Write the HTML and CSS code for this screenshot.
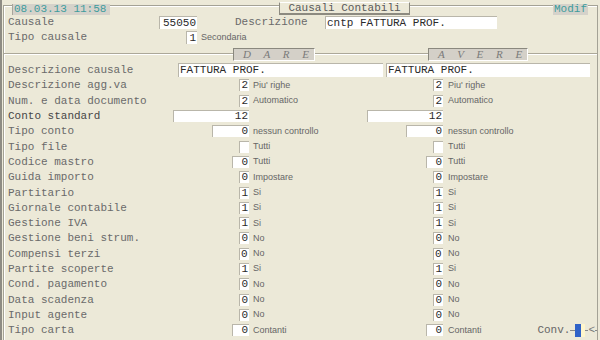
FILE: index.html
```html
<!DOCTYPE html>
<html lang="it">
<head>
  <meta charset="UTF-8" />
  <title>Causali Contabili</title>
  <link rel="stylesheet" href="styles.css">
</head>
<body>
  <div class="screen">
    <div class="frame">
      <!-- barra in alto: data, titolo, modalita -->
      <div class="top">
        <div class="clock">08.03.13 11:58</div>
        <div class="title">Causali Contabili</div>
        <div class="modif">Modif</div>
      </div>

      <!-- testata causale -->
      <div class="head-row">
        <span class="lbl-causale">Causale</span>
        <span class="box w38">55050</span>
        <span class="lbl-descr">Descrizione</span>
        <span class="box w172 left">cntp FATTURA PROF.</span>
      </div>
      <div class="head-row">
        <span class="lbl-tipo">Tipo causale</span>
        <span class="box w11">1</span>
        <span class="n">Secondaria</span>
      </div>

      <!-- separatore dare / avere -->
      <div class="sep">
        <div class="tab dare">D A R E</div>
        <div class="tab avere">A V E R E</div>
      </div>

      <div class="row">
        <span>Descrizione causale</span>
        <div class="wide">
          <span class="box left d1">FATTURA PROF.</span>
          <span class="box left d2">FATTURA PROF.</span>
        </div>
      </div>
      <div class="row">
        <span>Descrizione agg.va</span>
        <div class="f"><span class="box w10">2</span></div><span class="n">Piu' righe</span>
        <div class="f"><span class="box w10">2</span></div><span class="n a">Piu' righe</span>
      </div>
      <div class="row">
        <span>Num. e data documento</span>
        <div class="f"><span class="box w10">2</span></div><span class="n">Automatico</span>
        <div class="f"><span class="box w10">2</span></div><span class="n a">Automatico</span>
      </div>
      <div class="row">
        <span class="strong">Conto standard</span>
        <div class="f"><span class="box w76">12</span></div><span class="n"></span>
        <div class="f"><span class="box w76">12</span></div><span class="n a"></span>
      </div>
      <div class="row">
        <span>Tipo conto</span>
        <div class="f"><span class="box w37">0</span></div><span class="n">nessun controllo</span>
        <div class="f"><span class="box w37">0</span></div><span class="n a">nessun controllo</span>
      </div>
      <div class="row">
        <span>Tipo file</span>
        <div class="f"><span class="box w10"></span></div><span class="n">Tutti</span>
        <div class="f"><span class="box w10"></span></div><span class="n a">Tutti</span>
      </div>
      <div class="row">
        <span>Codice mastro</span>
        <div class="f"><span class="box w17">0</span></div><span class="n">Tutti</span>
        <div class="f"><span class="box w17">0</span></div><span class="n a">Tutti</span>
      </div>
      <div class="row">
        <span>Guida importo</span>
        <div class="f"><span class="box w10">0</span></div><span class="n">Impostare</span>
        <div class="f"><span class="box w10">0</span></div><span class="n a">Impostare</span>
      </div>
      <div class="row">
        <span>Partitario</span>
        <div class="f"><span class="box w10">1</span></div><span class="n">Si</span>
        <div class="f"><span class="box w10">1</span></div><span class="n a">Si</span>
      </div>
      <div class="row">
        <span>Giornale contabile</span>
        <div class="f"><span class="box w10">1</span></div><span class="n">Si</span>
        <div class="f"><span class="box w10">1</span></div><span class="n a">Si</span>
      </div>
      <div class="row">
        <span>Gestione IVA</span>
        <div class="f"><span class="box w10">1</span></div><span class="n">Si</span>
        <div class="f"><span class="box w10">1</span></div><span class="n a">Si</span>
      </div>
      <div class="row">
        <span>Gestione beni strum.</span>
        <div class="f"><span class="box w10">0</span></div><span class="n">No</span>
        <div class="f"><span class="box w10">0</span></div><span class="n a">No</span>
      </div>
      <div class="row">
        <span>Compensi terzi</span>
        <div class="f"><span class="box w10 left">0</span></div><span class="n">No</span>
        <div class="f"><span class="box w10 left">0</span></div><span class="n a">No</span>
      </div>
      <div class="row">
        <span>Partite scoperte</span>
        <div class="f"><span class="box w10">1</span></div><span class="n">Si</span>
        <div class="f"><span class="box w10">1</span></div><span class="n a">Si</span>
      </div>
      <div class="row">
        <span>Cond. pagamento</span>
        <div class="f"><span class="box w10">0</span></div><span class="n">No</span>
        <div class="f"><span class="box w10">0</span></div><span class="n a">No</span>
      </div>
      <div class="row">
        <span>Data scadenza</span>
        <div class="f"><span class="box w10">0</span></div><span class="n">No</span>
        <div class="f"><span class="box w10">0</span></div><span class="n a">No</span>
      </div>
      <div class="row">
        <span>Input agente</span>
        <div class="f"><span class="box w10">0</span></div><span class="n">No</span>
        <div class="f"><span class="box w10">0</span></div><span class="n a">No</span>
      </div>
      <div class="row">
        <span>Tipo carta</span>
        <div class="f"><span class="box w17">0</span></div><span class="n">Contanti</span>
        <div class="f"><span class="box w17">0</span></div>
        <div class="last">
          <span class="n a">Contanti</span>
          <div class="conv">
            <span>Conv.</span>
            <i class="dash"></i>
            <i class="knob"></i>
            <i class="cream"></i>
            <i class="dash short"></i>
            <span class="lt">&lt;</span>
            <i class="dash tail"></i>
          </div>
        </div>
      </div>
    </div>
  </div>
</body>
</html>
```

FILE: styles.css
```css
body {
  margin: 0;
  background-color: #ece9d8;
  font-family: "Liberation Mono", "Courier New", monospace;
  font-size: 11px;
  color: #6a6a6a;
}

/* cornice della maschera */
.screen {
  width: 600px;
  height: 340px;
  box-sizing: border-box;
  border-left: 2px solid #8e8c84;
  padding-top: 5px;
  overflow: hidden;
}

.frame {
  margin-left: 1px;
  width: 595px;
  height: 340px;
  box-sizing: border-box;
  border: 1px solid #a4a296;
  border-bottom: none;
  box-shadow: inset 1px 1px 0 #fff;
  padding-left: 4px;
}

/* barra in alto */
.top {
  display: flex;
  align-items: flex-start;
  height: 13.5px;
  margin-top: -5px;
}

.clock {
  margin: 2.5px 0 0 4px;
  width: 98px;
  height: 11px;
  line-height: 11px;
  box-sizing: border-box;
  padding-left: 1px;
  border-left: 1px solid #a8a69c;
  background-color: #d5d2ca;
  color: #3e9c9c;
}

.title {
  margin: 0.5px 0 0 169px;
  width: 131px;
  height: 13px;
  box-sizing: border-box;
  border: 1px solid #8c8a80;
  border-top-color: #fff;
  border-bottom-width: 2px;
  background-color: #ece9d8;
  text-align: center;
  line-height: 10px;
  color: #5a5a5a;
}

.modif {
  margin: 2.5px 0 0 143px;
  width: 35px;
  height: 11px;
  line-height: 11px;
  background-color: #d5d2ca;
  color: #3e9c9c;
  text-align: center;
}

/* testata */
.head-row {
  display: flex;
  align-items: center;
  height: 15.3px;
}

.lbl-causale { width: 151px; }
.lbl-descr { width: 90px; margin-left: 38px; }
.lbl-tipo { width: 178px; }

.head-row .box {
  height: 13px;
  line-height: 12px;
}

/* campi */
.box {
  display: block;
  height: 12px;
  line-height: 11px;
  box-sizing: border-box;
  background-color: #fff;
  border-top: 1px solid #b9b6aa;
  border-left: 1px solid #b9b6aa;
  padding-right: 1px;
  text-align: right;
  white-space: pre;
  overflow: hidden;
  color: #2a2a2a;
}

.box.left {
  text-align: left;
  padding-left: 1px;
}

.w10 { width: 10px; }
.w11 { width: 11px; }
.w17 { width: 17px; }
.w37 { width: 37px; }
.w38 { width: 38px; }
.w76 { width: 76px; }
.w172 { width: 172px; }

/* note in chiaro accanto ai campi */
.n {
  font-family: "Liberation Sans", Arial, sans-serif;
  font-size: 9px;
  line-height: 10px;
  color: #666;
  padding-left: 4px;
  padding-bottom: 1px;
  white-space: nowrap;
}

.n.a { padding-left: 5px; }

/* separatore dare / avere */
.sep {
  display: flex;
  align-items: flex-start;
  height: 17.4px;
  margin-left: -4px;
  padding-left: 229px;
  background: linear-gradient(to bottom,
    transparent 8px, #aca899 8px, #aca899 9px,
    #fff 9px, #fff 10px, transparent 10px);
}

.tab {
  margin-top: 3.4px;
  height: 12.5px;
  box-sizing: border-box;
  background-color: #d4d0c8;
  border-top: 1px solid #8a887e;
  border-left: 1px solid #8a887e;
  border-right: 1px solid #fff;
  border-bottom: 1px solid #fff;
  font-family: "Liberation Serif", "Times New Roman", serif;
  font-style: italic;
  font-size: 11px;
  line-height: 10px;
  word-spacing: 10px;
  padding-left: 9px;
  color: #7a7a7a;
  white-space: pre;
}

.dare { width: 82px; }
.avere { width: 100px; margin-left: 113px; }

/* righe della griglia */
.row {
  display: grid;
  grid-template-columns: 157px 84px 118px 76px 1fr;
  align-items: center;
  height: 15.3px;
  white-space: nowrap;
}

.row .strong { color: #474747; }

.row .f {
  display: flex;
  justify-content: flex-end;
}

.row .wide {
  grid-column: 2 / -1;
  display: flex;
  gap: 3px;
  padding-left: 13px;
}

.wide .box {
  height: 14px;
  line-height: 13px;
}

.d1 { width: 205px; }
.d2 { width: 204px; }

/* ultima riga con il convertitore */
.last {
  display: flex;
  justify-content: space-between;
  align-items: center;
}

.conv {
  display: flex;
  align-items: center;
  color: #666;
}

.conv .dash {
  width: 5px;
  height: 1px;
  background-color: #888;
}

.conv .dash.short { width: 3px; }
.conv .dash.tail { width: 2px; }

.conv .knob {
  width: 6px;
  height: 13px;
  background-color: #2f62c8;
}

.conv .cream {
  width: 4px;
  height: 13px;
  background-color: #fff6cc;
}

.conv .lt {
  color: #777;
}
```
